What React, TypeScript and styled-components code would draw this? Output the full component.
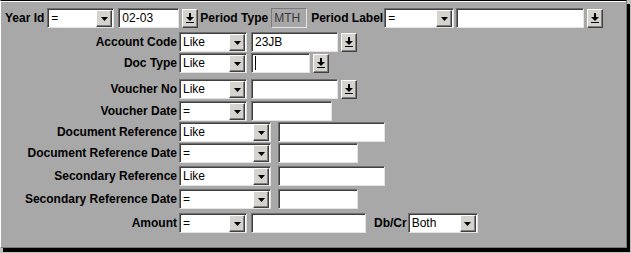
import React, { FC } from 'react';
import styled, { createGlobalStyle } from 'styled-components';

const GlobalStyle = createGlobalStyle`
  html, body {
    margin: 0;
    padding: 0;
    background: #c0c0c0;
  }
  body {
    font-family: "Liberation Sans", Arial, sans-serif;
  }
`

interface comboProps {
  value: string
  width: number
  ml?: number
}

const ComboBox: FC<comboProps> = ({ value, width, ml = 0 }) => (
  <Combo $w={width} $ml={ml}>
    <ComboText>{value}</ComboText>
    <DropBtn>
      <svg width="7" height="4" viewBox="0 0 7 4">
        <path d="M0 0h7L3.5 4z" fill="#000" />
      </svg>
    </DropBtn>
  </Combo>
)

const PickButton: FC = () => (
  <PickBtn>
    <svg width="8" height="10" viewBox="0 0 8 10">
      <path d="M3 0h2v4h3L4 8 0 4h3z" fill="#000" />
      <path d="M0 9h8v1H0z" fill="#000" />
    </svg>
  </PickBtn>
)

interface rowDef {
  label: string
  op: string
  wide?: boolean
  input: number
  value?: string
  pick?: boolean
  caret?: boolean
  mt: number
}

const rows: rowDef[] = [
  { label: 'Account Code', op: 'Like', input: 87, value: '23JB', pick: true, mt: 4 },
  { label: 'Doc Type', op: 'Like', input: 59, pick: true, caret: true, mt: 1 },
  { label: 'Voucher No', op: 'Like', input: 87, pick: true, mt: 6 },
  { label: 'Voucher Date', op: '=', input: 81, mt: 2 },
  { label: 'Document Reference', op: 'Like', wide: true, input: 107, mt: 1 },
  { label: 'Document Reference Date', op: '=', wide: true, input: 80, mt: 1 },
  { label: 'Secondary Reference', op: 'Like', wide: true, input: 107, mt: 3 },
  { label: 'Secondary Reference Date', op: '=', wide: true, input: 80, mt: 3 },
]

export default function App() {
  return (
    <>
      <GlobalStyle />
      <Frame>
        <Panel>
          <Row $mt={0} $pl={4}>
            <Label>Year Id</Label>
            <ComboBox value="=" width={67} ml={3} />
            <TextBox $w={61} $ml={4}>02-03</TextBox>
            <PickButton />
            <Label $ml={2}>Period Type</Label>
            <ReadOnlyBox>MTH</ReadOnlyBox>
            <Label $ml={4}>Period Label</Label>
            <ComboBox value="=" width={70} ml={1} />
            <TextBox $w={128} $ml={2} />
            <PickButton />
          </Row>

          {rows.map((r) => (
            <Row key={r.label} $mt={r.mt}>
              <FieldLabel>{r.label}</FieldLabel>
              <ComboBox value={r.op} width={r.wide ? 92 : 68} />
              <TextBox $w={r.input} $ml={r.wide ? 7 : 4}>
                {r.caret && <Caret />}
                {r.value}
              </TextBox>
              {r.pick && <PickButton />}
            </Row>
          ))}

          <Row $mt={4}>
            <FieldLabel>Amount</FieldLabel>
            <ComboBox value="=" width={68} />
            <TextBox $w={115} $ml={4} />
            <Label $ml={8}>Db/Cr</Label>
            <ComboBox value="Both" width={70} ml={1} />
          </Row>
        </Panel>
      </Frame>
    </>
  )
}

const Frame = styled.div`
  width: 631px;
  height: 253px;
  box-sizing: border-box;
  padding: 0 4px 5px 0;
`
const Panel = styled.div`
  width: 627px;
  height: 248px;
  box-sizing: border-box;
  background: #a8a8a8;
  border-top: 1px solid #000;
  border-left: 1px solid #fff;
  border-right: 1px solid #7a7a7a;
  border-bottom: 1px solid #7a7a7a;
  box-shadow: inset 0 1px 0 #fff, 3px 4px 0 #000;
  padding-top: 7px;
  display: flex;
  flex-direction: column;
`
const Row = styled.div<{ $mt: number; $pl?: number }>`
  display: flex;
  align-items: center;
  height: 20px;
  margin-top: ${p => p.$mt}px;
  padding-left: ${p => p.$pl ?? 0}px;
`
const Label = styled.span<{ $ml?: number }>`
  font-size: 12px;
  font-weight: bold;
  color: #000;
  white-space: nowrap;
  margin-left: ${p => p.$ml ?? 0}px;
`
const FieldLabel = styled(Label)`
  width: 178px;
  box-sizing: border-box;
  padding-right: 2px;
  text-align: right;
`
const Combo = styled.div<{ $w: number; $ml: number }>`
  width: ${p => p.$w}px;
  height: 20px;
  margin-left: ${p => p.$ml}px;
  box-sizing: border-box;
  display: flex;
  align-items: stretch;
  background: #fff;
  border: 1px solid;
  border-color: #6e6e6e #e4e4e4 #e4e4e4 #6e6e6e;
  box-shadow: inset 1px 1px 0 #404040;
  padding: 1px 1px 0 1px;
`
const ComboText = styled.span`
  flex: 1;
  font-size: 12px;
  color: #000;
  padding-left: 2px;
  line-height: 17px;
  overflow: hidden;
  white-space: nowrap;
`
const DropBtn = styled.div`
  width: 16px;
  box-sizing: border-box;
  display: grid;
  place-items: center;
  background: #d6d3ce;
  border: 1px solid;
  border-color: #fff #404040 #404040 #fff;
  box-shadow: inset -1px -1px 0 #808080;
`
const TextBox = styled.div<{ $w: number; $ml: number }>`
  width: ${p => p.$w}px;
  height: 20px;
  margin-left: ${p => p.$ml}px;
  box-sizing: border-box;
  display: flex;
  align-items: center;
  background: #fff;
  border: 1px solid;
  border-color: #6e6e6e #e4e4e4 #e4e4e4 #6e6e6e;
  box-shadow: inset 1px 1px 0 #404040;
  padding-left: 3px;
  font-size: 12px;
  color: #000;
  white-space: nowrap;
`
const Caret = styled.span`
  width: 1px;
  height: 14px;
  background: #000;
`
const ReadOnlyBox = styled.div`
  width: 36px;
  height: 20px;
  margin-left: 3px;
  box-sizing: border-box;
  border: 1px solid;
  border-color: #7a7a7a #e4e4e4 #e4e4e4 #7a7a7a;
  padding-left: 2px;
  font-size: 12px;
  line-height: 18px;
  color: #3a3a3a;
  background: #a8a8a8;
`
const PickBtn = styled.div`
  width: 16px;
  height: 19px;
  margin-left: 3px;
  box-sizing: border-box;
  display: grid;
  place-items: center;
  background: #d6d3ce;
  border: 1px solid;
  border-color: #fff #404040 #404040 #fff;
  box-shadow: inset -1px -1px 0 #808080;
`
